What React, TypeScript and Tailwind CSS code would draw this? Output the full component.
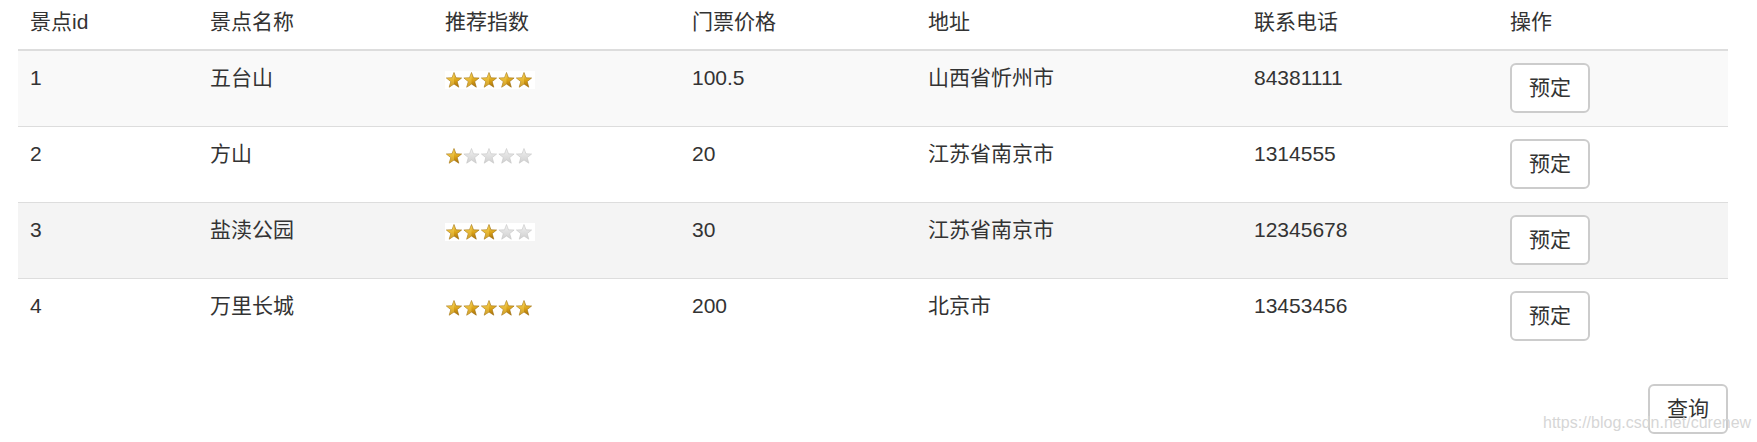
import React from "react";

type Spot = {
  id: number;
  name: string;
  stars: number;
  price: string;
  address: string;
  phone: string;
};

const spots: Spot[] = [
  { id: 1, name: "五台山", stars: 5, price: "100.5", address: "山西省忻州市", phone: "84381111" },
  { id: 2, name: "方山", stars: 1, price: "20", address: "江苏省南京市", phone: "1314555" },
  { id: 3, name: "盐渎公园", stars: 3, price: "30", address: "江苏省南京市", phone: "12345678" },
  { id: 4, name: "万里长城", stars: 5, price: "200", address: "北京市", phone: "13453456" },
];

const headers = ["景点id", "景点名称", "推荐指数", "门票价格", "地址", "联系电话", "操作"];

const cols = "grid grid-cols-[180px_235px_247px_236px_326px_256px_1fr]";

function Star({ on, x }: { on: boolean; x: number }) {
  const pts = "8,0.5 10,5.8 15.6,6 11.2,9.6 12.8,15.2 8,12 3.2,15.2 4.8,9.6 0.4,6 6,5.8";
  return (
    <g transform={`translate(${x},1)`}>
      <polygon
        points={pts}
        fill={on ? "url(#gold)" : "url(#grey)"}
        stroke={on ? "#9a6a08" : "#c4c4c4"}
        strokeWidth="0.6"
      />
      {on && <polygon points="8,0.5 8,12 3.2,15.2 4.8,9.6 0.4,6 6,5.8" fill="#f7d25a" opacity="0.45" />}
    </g>
  );
}

function Stars({ n }: { n: number }) {
  return (
    <svg width="90" height="18" viewBox="0 0 90 18" className="block bg-white">
      <defs>
        <linearGradient id="gold" x1="0" y1="0" x2="0" y2="1">
          <stop offset="0" stopColor="#f9d55b" />
          <stop offset="0.55" stopColor="#d9a116" />
          <stop offset="1" stopColor="#a8700a" />
        </linearGradient>
        <linearGradient id="grey" x1="0" y1="0" x2="0" y2="1">
          <stop offset="0" stopColor="#f2f2f2" />
          <stop offset="1" stopColor="#cfcfcf" />
        </linearGradient>
      </defs>
      {[0, 1, 2, 3, 4].map((i) => (
        <Star key={i} on={i < n} x={1 + i * 17.5} />
      ))}
    </svg>
  );
}

function Btn({ label }: { label: string }) {
  return (
    <button className="h-[50px] w-[80px] rounded-[6px] border-2 border-[#cccccc] bg-white text-[21px] leading-[30px] text-[#333333]">
      {label}
    </button>
  );
}

export default function App() {
  return (
    <div
      className="relative h-[442px] w-full overflow-hidden bg-white pl-[18px] pr-[29px] text-[21px] leading-[30px] text-[#333333]"
      style={{ fontFamily: '"Liberation Sans", "Noto Sans CJK SC", sans-serif' }}
    >
      <div className={`${cols} border-b-2 border-[#dddddd]`}>
        {headers.map((h) => (
          <div key={h} className="px-[12px] pb-[12px] pt-[7px]">
            {h}
          </div>
        ))}
      </div>
      {spots.map((s, i) => (
        <div
          key={s.id}
          className={`${cols} ${i > 0 ? "border-t border-[#dddddd]" : ""} ${
            i === 0 ? "bg-[#f9f9f9]" : i === 2 ? "bg-[#f4f4f4]" : "bg-white"
          }`}
        >
          <div className="px-[12px] pb-[13px] pt-[12px]">{s.id}</div>
          <div className="px-[12px] pb-[13px] pt-[12px]">{s.name}</div>
          <div className="px-[12px] pb-[13px] pt-[20px]">
            <Stars n={s.stars} />
          </div>
          <div className="px-[12px] pb-[13px] pt-[12px]">{s.price}</div>
          <div className="px-[12px] pb-[13px] pt-[12px]">{s.address}</div>
          <div className="px-[12px] pb-[13px] pt-[12px]">{s.phone}</div>
          <div className="px-[12px] pb-[13px] pt-[12px]">
            <Btn label="预定" />
          </div>
        </div>
      ))}
      <div className="mt-[30px] flex justify-end">
        <Btn label="查询" />
      </div>
      <div
        className="pointer-events-none absolute left-[1543px] top-[413px] text-[16px] leading-[20px] text-[#d6d6d6]"
        style={{ fontFamily: '"Liberation Sans", sans-serif' }}
      >
        https://blog.csdn.net/curenew
      </div>
    </div>
  );
}
